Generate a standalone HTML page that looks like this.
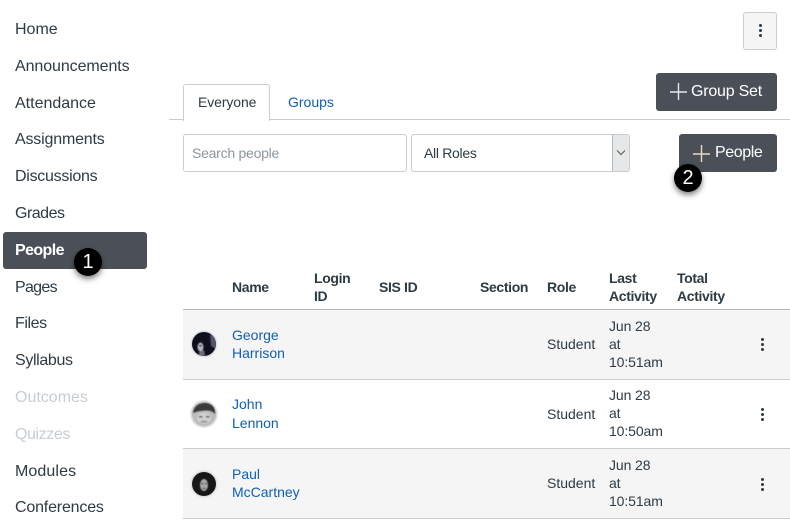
<!DOCTYPE html>
<html><head><meta charset="utf-8"><style>
html,body{margin:0;padding:0;background:#fff}
body{position:relative;width:790px;height:522px;overflow:hidden;font-family:"Liberation Sans",sans-serif;color:#2d3b45}
.t{position:absolute;white-space:nowrap;line-height:18px}
.n{left:15px;font-size:16px;line-height:20px}
.d{color:#c7cdd1}
.h{font-size:14px;font-weight:bold;letter-spacing:-.35px}
.l{color:#0f5fb5;font-size:14px}
.c{font-size:14px}
.b{position:absolute;background:#4b5058;border-radius:3px}
.r{position:absolute;left:183px;width:607px;height:69px;border-top:1px solid #c7cdd1}
.m{position:absolute;width:28px;height:28px;border-radius:50%;background:#000;color:#fff;font-size:20px;line-height:28px;text-align:center;box-shadow:0 3px 6px rgba(0,0,0,.5)}
.dot{position:absolute;width:3px;height:3px;border-radius:50%;background:#2d3b45}
.av{position:absolute;left:190px}
</style></head><body>
<div class="b" style="left:3px;top:232px;width:144px;height:37px"></div>
<div class="t n" style="top:20px">Home</div>
<div class="t n" style="top:57px;letter-spacing:-.08px">Announcements</div>
<div class="t n" style="top:94px">Attendance</div>
<div class="t n" style="top:130px;letter-spacing:-.18px">Assignments</div>
<div class="t n" style="top:167px;letter-spacing:-.27px">Discussions</div>
<div class="t n" style="top:204px;letter-spacing:-.5px">Grades</div>
<div class="t n" style="top:241px;color:#fff;font-weight:bold;letter-spacing:-.6px">People</div>
<div class="t n" style="top:278px;letter-spacing:-.7px">Pages</div>
<div class="t n" style="top:314px;letter-spacing:-.4px">Files</div>
<div class="t n" style="top:351px;letter-spacing:-.35px">Syllabus</div>
<div class="t n d" style="top:388px">Outcomes</div>
<div class="t n d" style="top:425px;letter-spacing:-.4px">Quizzes</div>
<div class="t n" style="top:462px;letter-spacing:.1px">Modules</div>
<div class="t n" style="top:498px;letter-spacing:-.18px">Conferences</div>
<div class="m" style="left:74px;top:248px">1</div>

<div style="position:absolute;left:743px;top:12px;width:32px;height:36px;background:#f5f5f5;border:1px solid #c7cdd1;border-radius:3px"></div>
<div class="dot" style="left:759px;top:24px"></div>
<div class="dot" style="left:759px;top:29px"></div>
<div class="dot" style="left:759px;top:34px"></div>

<div style="position:absolute;left:169px;top:119px;width:621px;height:1px;background:#c7cdd1"></div>
<div style="position:absolute;left:183px;top:84px;width:85px;height:36px;background:#fff;border:1px solid #c7cdd1;border-bottom:0;border-radius:3px 3px 0 0"></div>
<div class="t" style="left:198px;top:93px;font-size:14px;letter-spacing:-.1px">Everyone</div>
<div class="t l" style="left:288px;top:93px">Groups</div>

<div class="b" style="left:656px;top:73px;width:121px;height:38px"></div>
<svg style="position:absolute;left:670px;top:83px" width="18" height="18"><path d="M0 9H17M8.5 0V17" stroke="#dfe9ee" stroke-width="1.4" fill="none"/></svg>
<div class="t" style="left:691px;top:83px;color:#fff;font-size:16px;letter-spacing:-.22px">Group Set</div>

<div style="position:absolute;left:183px;top:134px;width:222px;height:36px;border:1px solid #c7cdd1;border-radius:3px"></div>
<div class="t" style="left:192px;top:144px;font-size:14px;color:#8b969e;letter-spacing:-.25px">Search people</div>
<div style="position:absolute;left:411px;top:134px;width:217px;height:36px;border:1px solid #c7cdd1;border-radius:3px;overflow:hidden"><div style="position:absolute;right:0;top:0;width:16px;height:36px;background:#e6e7e8;border-left:1px solid #b5b9bc"></div></div>
<svg style="position:absolute;left:616px;top:149px" width="11" height="8"><path d="M1 1.5L5 5.5L9 1.5" stroke="#555" stroke-width="1" fill="none"/></svg>
<div class="t" style="left:424px;top:144px;font-size:14px;letter-spacing:-.3px">All Roles</div>

<div class="b" style="left:679px;top:134px;width:98px;height:38px"></div>
<svg style="position:absolute;left:693px;top:145px" width="18" height="18"><path d="M0 9H17M8.5 0V17" stroke="#e8d9c0" stroke-width="1.4" fill="none"/></svg>
<div class="t" style="left:715px;top:144px;color:#fff;font-size:16px;letter-spacing:-.4px">People</div>
<div class="m" style="left:674px;top:164px">2</div>

<div class="t h" style="left:232px;top:278px">Name</div>
<div class="t h" style="left:314px;top:269px">Login<br>ID</div>
<div class="t h" style="left:379px;top:278px">SIS ID</div>
<div class="t h" style="left:480px;top:278px">Section</div>
<div class="t h" style="left:547px;top:278px">Role</div>
<div class="t h" style="left:609px;top:269px">Last<br>Activity</div>
<div class="t h" style="left:677px;top:269px">Total<br>Activity</div>

<div class="r" style="top:309px;background:#f5f5f5;border-top-color:#b4b9bd"></div>
<div class="r" style="top:379px;background:#fff"></div>
<div class="r" style="top:448px;background:#f5f5f5;border-bottom:1px solid #c7cdd1"></div>

<svg class="av" style="top:330px" width="28" height="28"><defs><filter id="bl" x="-20%" y="-20%" width="140%" height="140%"><feGaussianBlur stdDeviation=".6"/></filter><clipPath id="cp"><circle cx="14" cy="14" r="12"/></clipPath></defs><circle cx="14" cy="14" r="13.7" fill="#dfe3e5"/><circle cx="14" cy="14" r="12" fill="#0e0e1c"/><g clip-path="url(#cp)" filter="url(#bl)"><path d="M20 4L27 8L26 19L21 16Z" fill="#55556a"/><ellipse cx="10.5" cy="17" rx="3" ry="4.5" fill="#b4b4bc"/><path d="M9 22L14 20L15 26L9 26Z" fill="#6d6d78"/><rect x="9" y="15" width="3" height="1.4" fill="#222"/></g></svg>
<svg class="av" style="top:400px" width="28" height="28"><circle cx="14" cy="14" r="13.7" fill="#d8dcdd"/><circle cx="14" cy="14" r="12" fill="#bcbcbc"/><g clip-path="url(#cp)" filter="url(#bl)"><path d="M3 13C4 5 10 3 15 3C22 3 26 8 25 14C22 10 16 10 11 11C8 11 6 12 3 13Z" fill="#3a3a3a"/><ellipse cx="14" cy="18" rx="7" ry="5.5" fill="#cfcfcf"/><rect x="9" y="16" width="3.5" height="1.5" fill="#555"/><rect x="16" y="16" width="3.5" height="1.5" fill="#555"/><rect x="11" y="21" width="6" height="1.2" fill="#777"/></g></svg>
<svg class="av" style="top:470px" width="28" height="28"><circle cx="14" cy="14" r="13.7" fill="#dfe3e5"/><circle cx="14" cy="14" r="12" fill="#171717"/><g clip-path="url(#cp)" filter="url(#bl)"><ellipse cx="14" cy="15" rx="4" ry="6" fill="#a8a8a8"/><rect x="11.5" y="13" width="2" height="1.2" fill="#222"/><rect x="15" y="13" width="2" height="1.2" fill="#222"/><rect x="12.5" y="18" width="3.5" height="1" fill="#444"/></g></svg>

<div class="t l" style="left:232px;top:326px">George<br>Harrison</div>
<div class="t l" style="left:232px;top:395px">John</div>
<div class="t l" style="left:232px;top:414px">Lennon</div>
<div class="t l" style="left:232px;top:465px">Paul<br>McCartney</div>

<div class="t c" style="left:547px;top:335px">Student</div>
<div class="t c" style="left:547px;top:405px">Student</div>
<div class="t c" style="left:547px;top:474px">Student</div>
<div class="t c" style="left:609px;top:317px;letter-spacing:-.1px">Jun 28<br>at<br>10:51am</div>
<div class="t c" style="left:609px;top:386px;letter-spacing:-.1px">Jun 28<br>at<br>10:50am</div>
<div class="t c" style="left:609px;top:456px;letter-spacing:-.1px">Jun 28<br>at<br>10:51am</div>

<div class="dot" style="left:761px;top:338px"></div><div class="dot" style="left:761px;top:343px"></div><div class="dot" style="left:761px;top:348px"></div>
<div class="dot" style="left:761px;top:408px"></div><div class="dot" style="left:761px;top:413px"></div><div class="dot" style="left:761px;top:418px"></div>
<div class="dot" style="left:761px;top:478px"></div><div class="dot" style="left:761px;top:483px"></div><div class="dot" style="left:761px;top:488px"></div>
</body></html>
